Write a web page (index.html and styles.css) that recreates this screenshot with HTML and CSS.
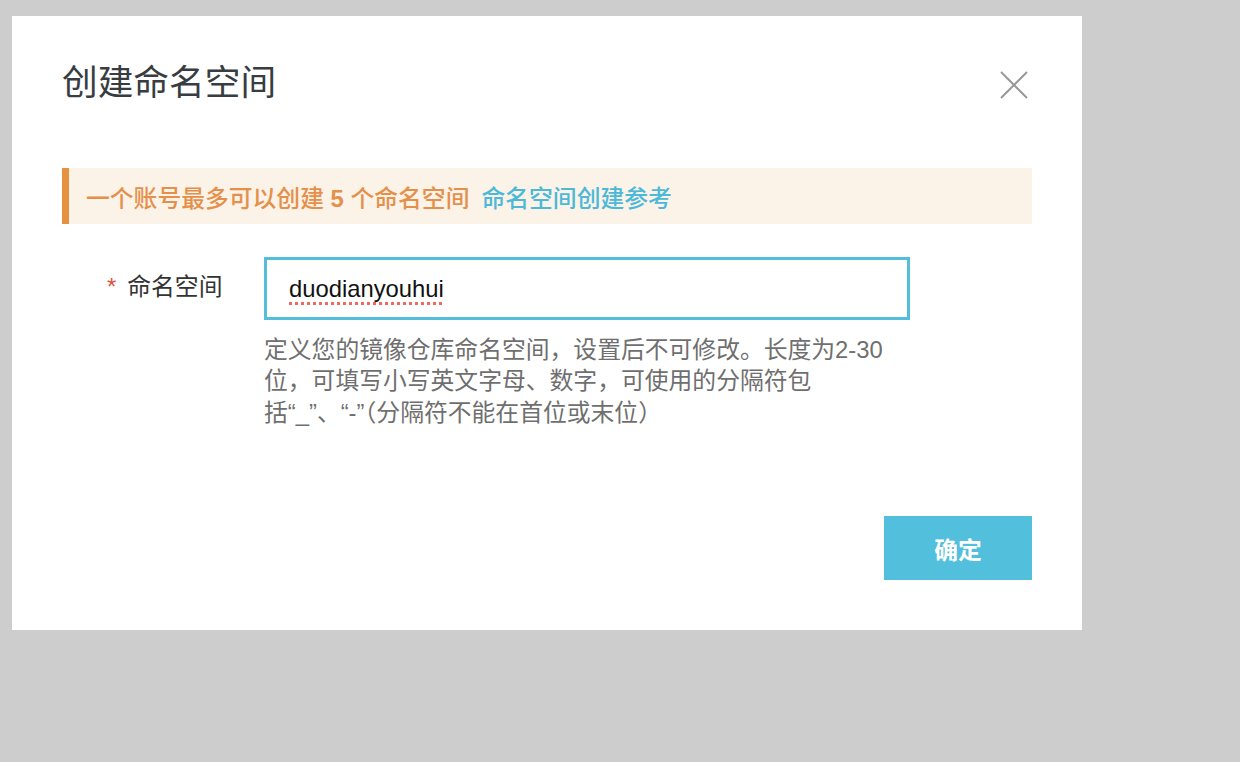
FILE: index.html
```html
<!DOCTYPE html>
<html lang="zh-CN">
<head>
<meta charset="utf-8">
<title>创建命名空间</title>
<link rel="stylesheet" href="styles.css">
</head>
<body>
<div class="dialog">
  <div class="dialog-header">
    <h1 class="dialog-title">创建命名空间</h1>
    <svg class="close-icon" width="34" height="34" viewBox="0 0 34 34" aria-label="关闭">
      <line x1="3" y1="4" x2="29" y2="30" stroke="#999" stroke-width="2"/>
      <line x1="29" y1="4" x2="3" y2="30" stroke="#999" stroke-width="2"/>
    </svg>
  </div>
  <div class="alert">
    <span class="alert-text">一个账号最多可以创建 <b class="num">5</b> 个命名空间</span>
    <a class="alert-link" href="#">命名空间创建参考</a>
  </div>
  <div class="form-row">
    <div class="form-label"><span class="required">*</span>命名空间</div>
    <div class="form-control">
      <div class="text-input" role="textbox"><span class="misspelled">duodianyouhui</span></div>
      <div class="help">定义您的镜像仓库命名空间，设置后不可修改。长度为2-30<br>位，可填写小写英文字母、数字，可使用的分隔符包<br>括“_”、“-”<span class="cjk">（</span>分隔符不能在首位或末位<span class="cjk">）</span></div>
    </div>
  </div>
  <div class="dialog-footer">
    <button class="btn-primary" type="button">确定</button>
  </div>
</div>
</body>
</html>
```

FILE: styles.css
```css
html, body {
  margin: 0;
  padding: 0;
}

body {
  background: #cdcdcd;
  width: 1240px;
  height: 762px;
  overflow: hidden;
  font-family: "Liberation Sans", "Noto Sans CJK SC", sans-serif;
  padding: 16px 0 0 12px;
  box-sizing: border-box;
}

.dialog {
  width: 1070px;
  height: 614px;
  background: #ffffff;
  box-sizing: border-box;
  padding: 46px 50px 50px 50px;
  display: flex;
  flex-direction: column;
}

.dialog-header {
  display: flex;
  justify-content: space-between;
  align-items: center;
  height: 43px;
}

.dialog-title {
  margin: 0;
  font-size: 35.7px;
  line-height: 43px;
  font-weight: normal;
  color: #373d41;
}

.close-icon {
  display: block;
  margin-top: 2px;
}

.alert {
  margin-top: 63px;
  height: 56px;
  box-sizing: border-box;
  background: #fbf2e8;
  border-left: 7px solid #e5913f;
  padding-left: 17px;
  display: flex;
  align-items: center;
  gap: 12px;
  font-size: 23.8px;
  font-weight: 500;
}

.alert-text {
  color: #e5904a;
}

.num {
  font-weight: bold;
}

.alert-link {
  color: #4cb9d8;
  text-decoration: none;
}

.form-row {
  margin-top: 33px;
  display: flex;
}

.form-label {
  width: 202px;
  box-sizing: border-box;
  padding-left: 45px;
  height: 63px;
  line-height: 60px;
  font-size: 23.8px;
  color: #333;
}

.required {
  color: #e0533e;
  margin-right: 11px;
}

.form-control {
  width: 646px;
}

.text-input {
  height: 63px;
  box-sizing: border-box;
  border: 3px solid #52bedc;
  padding-left: 22px;
  font-size: 23.8px;
  line-height: 57px;
  color: #111;
}

.misspelled {
  text-decoration: underline dotted #ee6a5e;
  text-decoration-thickness: 3px;
  text-underline-offset: 5px;
}

.help {
  margin-top: 15px;
  font-size: 23.8px;
  line-height: 30.6px;
  color: #6f6f6f;
  white-space: nowrap;
}

.cjk {
  font-family: "Noto Sans CJK SC", sans-serif;
}

.dialog-footer {
  margin-top: auto;
  display: flex;
  justify-content: flex-end;
}

.btn-primary {
  width: 148px;
  height: 64px;
  border: none;
  background: #52bfdc;
  color: #ffffff;
  font-family: "Liberation Sans", "Noto Sans CJK SC", sans-serif;
  font-size: 23.8px;
  font-weight: bold;
  padding: 0;
}
```
